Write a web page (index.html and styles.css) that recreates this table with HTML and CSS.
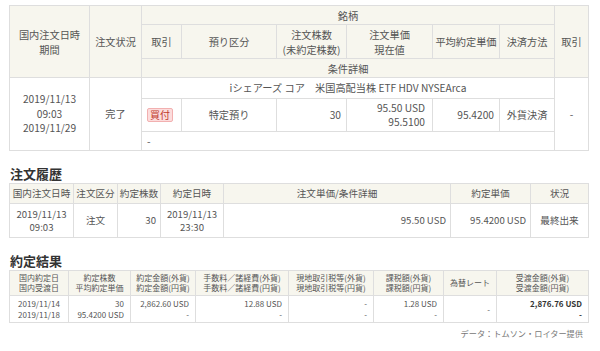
FILE: index.html
```html
<!DOCTYPE html>
<html lang="ja">
<head>
<meta charset="utf-8">
<link rel="stylesheet" href="styles.css">
</head>
<body>
<div class="page">
  <table class="t t1">
    <colgroup>
      <col style="width:80px"><col style="width:52px"><col style="width:40px"><col style="width:95px"><col style="width:70px"><col style="width:86px"><col style="width:67px"><col style="width:55px"><col style="width:34px">
    </colgroup>
    <tr class="h1r1">
      <th rowspan="3">国内注文日時<br>期間</th>
      <th rowspan="3">注文状況</th>
      <th colspan="6">銘柄</th>
      <th rowspan="3">取引</th>
    </tr>
    <tr class="h1r2">
      <th>取引</th>
      <th>預り区分</th>
      <th>注文株数<br>(未約定株数)</th>
      <th>注文単価<br>現在値</th>
      <th>平均約定単価</th>
      <th>決済方法</th>
    </tr>
    <tr class="h1r3">
      <th colspan="6">条件詳細</th>
    </tr>
    <tr class="b1r1">
      <td rowspan="3" class="c">2019/11/13<br>09:03<br>2019/11/29</td>
      <td rowspan="3" class="c">完了</td>
      <td colspan="6" class="c">iシェアーズ コア　米国高配当株 ETF HDV NYSEArca</td>
      <td rowspan="3" class="c">-</td>
    </tr>
    <tr class="b1r2">
      <td class="c badgecell"><span class="badge">買付</span></td>
      <td class="c">特定預り</td>
      <td class="r">30</td>
      <td class="r pr8">95.50 USD<br>95.5100</td>
      <td class="r">95.4200</td>
      <td class="c">外貨決済</td>
    </tr>
    <tr class="b1r3">
      <td colspan="6" class="l">-</td>
    </tr>
  </table>

  <h2 class="sec">注文履歴</h2>
  <table class="t t2">
    <colgroup>
      <col style="width:64px"><col style="width:44px"><col style="width:43px"><col style="width:63px"><col style="width:227px"><col style="width:80px"><col style="width:58px">
    </colgroup>
    <tr class="h2">
      <th>国内注文日時</th>
      <th>注文区分</th>
      <th>約定株数</th>
      <th>約定日時</th>
      <th>注文単価/条件詳細</th>
      <th>約定単価</th>
      <th>状況</th>
    </tr>
    <tr class="b2">
      <td class="c">2019/11/13<br>09:03</td>
      <td class="c">注文</td>
      <td class="r">30</td>
      <td class="c">2019/11/13<br>23:30</td>
      <td class="r">95.50 USD</td>
      <td class="r">95.4200 USD</td>
      <td class="c">最終出来</td>
    </tr>
  </table>

  <h2 class="sec">約定結果</h2>
  <table class="t t3">
    <colgroup>
      <col style="width:59px"><col style="width:62px"><col style="width:65px"><col style="width:93px"><col style="width:85px"><col style="width:70px"><col style="width:53px"><col style="width:92px">
    </colgroup>
    <tr class="h3">
      <th>国内約定日<br>国内受渡日</th>
      <th>約定株数<br>平均約定単価</th>
      <th>約定金額(外貨)<br>約定金額(円貨)</th>
      <th>手数料／諸経費(外貨)<br>手数料／諸経費(円貨)</th>
      <th>現地取引税等(外貨)<br>現地取引税等(円貨)</th>
      <th>課税額(外貨)<br>課税額(円貨)</th>
      <th>為替レート</th>
      <th>受渡金額(外貨)<br>受渡金額(円貨)</th>
    </tr>
    <tr class="b3">
      <td class="c">2019/11/14<br>2019/11/18</td>
      <td class="r">30<br>95.4200 USD</td>
      <td class="r">2,862.60 USD<br>-</td>
      <td class="r">12.88 USD<br>-</td>
      <td class="r">-<br>-</td>
      <td class="r">1.28 USD<br>-</td>
      <td class="r mid">-</td>
      <td class="r"><b>2,876.76 USD</b><br><b>-</b></td>
    </tr>
  </table>
  <p class="credit">データ：トムソン・ロイター提供</p>
</div>
</body>
</html>
```

FILE: styles.css
```css
* { box-sizing: border-box; }
html, body { margin: 0; padding: 0; background: #fff; }
body {
  font-family: "Noto Sans CJK JP", "Noto Sans", sans-serif;
  color: #555;
}
.page {
  width: 600px;
  padding: 5px 12px 0 9px;
}
.t {
  border-collapse: collapse;
  table-layout: fixed;
  width: 579px;
}
.t th, .t td {
  border: 1px solid #dedede;
  font-weight: normal;
  vertical-align: middle;
  white-space: nowrap;
  overflow: visible;
}
.t th {
  background: #f7f6ee;
  text-align: center;
  padding: 0 1px;
}
.c { text-align: center; }
.r { text-align: right; }
.l { text-align: left; }

/* table 1 */
.t1 th, .t1 td { font-size: 10.2px; line-height: 15px; }
.t1 td { padding: 0 5px; line-height: 14.5px; }
.t1 td.pr8 { padding-right: 7px; }
.h1r1 th { height: 19px; }
.h1r2 th { height: 34px; }
.h1r3 th { height: 19px; }
.b1r1 td { height: 21px; }
.b1r2 td { height: 33px; }
.b1r3 td { height: 19px; }
.t1 td.badgecell { text-align: left; padding-left: 5px; }
.badge {
  display: inline-block;
  background: #fcdcdc;
  border: 1px solid #f2b0b0;
  color: #c0392b;
  border-radius: 2px;
  padding: 0 2px;
  line-height: 12px;
  font-size: 10px;
}

.sec {
  margin: 14px 0 0 1px;
  font-size: 13px;
  line-height: 18px;
  font-weight: bold;
  color: #333;
}

/* table 2 */
.t2 th, .t2 td { font-size: 9.6px; line-height: 13px; }
.t2 td { padding: 0 4px; }
.h2 th { height: 20px; }
.b2 td { height: 34px; }

/* table 3 */
.t3 th, .t3 td { font-size: 8px; line-height: 10px; }
.t3 td { padding: 0 6px; line-height: 11px; }
.h3 th { height: 25px; }
.b3 td { height: 27px; vertical-align: top; padding-top: 2px; }
.b3 td.mid { vertical-align: middle; padding-top: 0; }
.b3 b { color: #333; }

.credit {
  margin: 4px 5px 0 0;
  text-align: right;
  font-size: 8.2px;
  line-height: 12px;
  color: #777;
}
```
